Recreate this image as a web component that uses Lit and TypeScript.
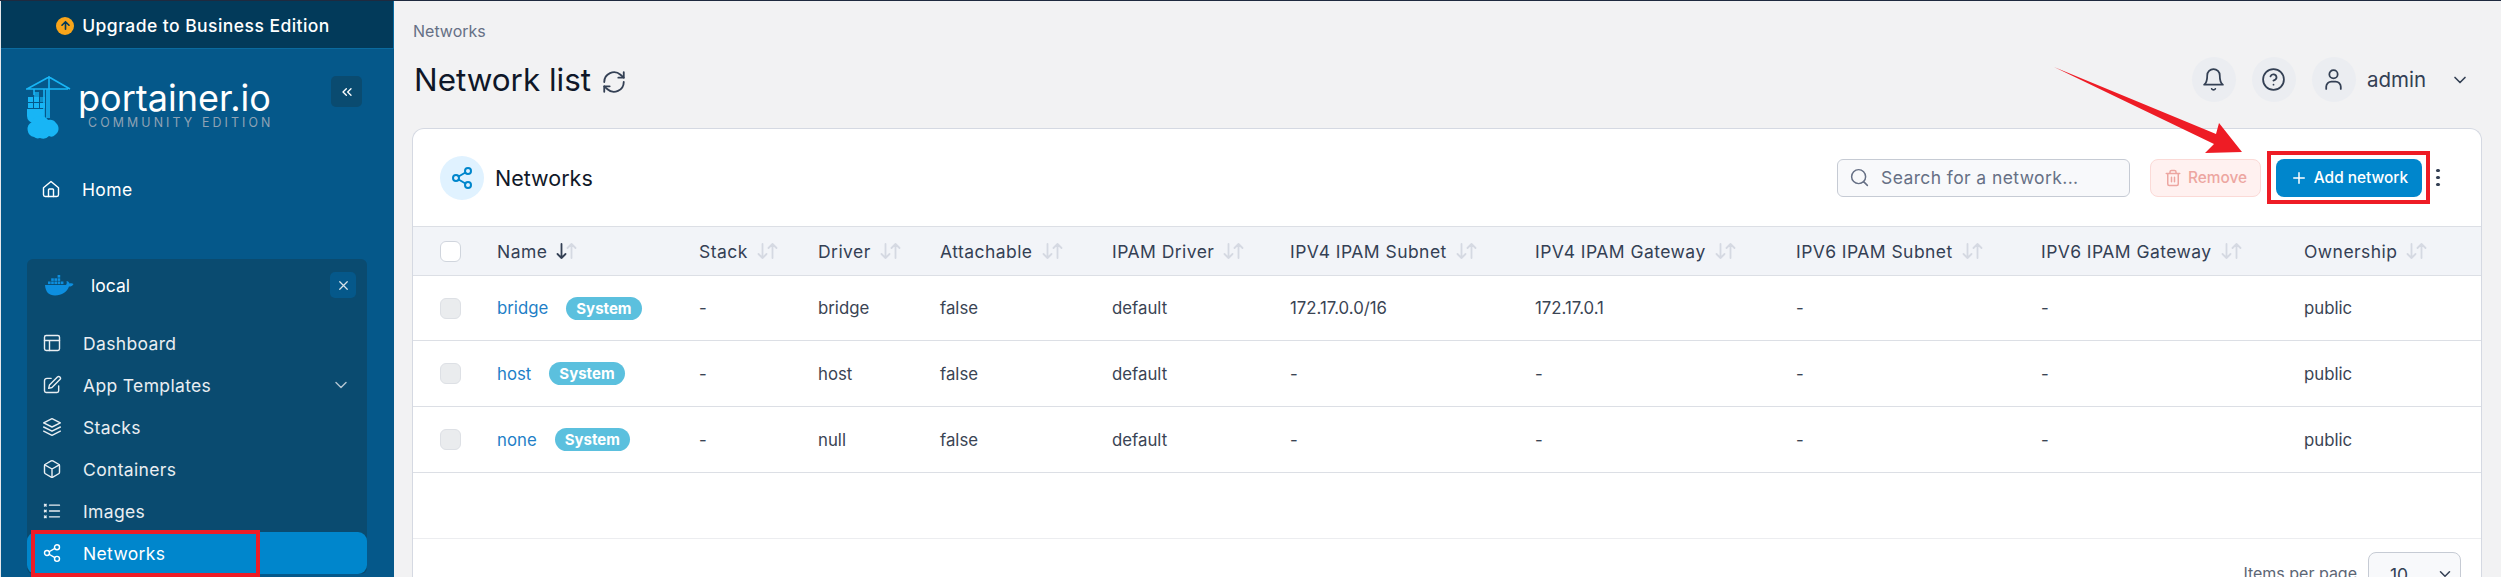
import { LitElement, html, css, svg } from "lit";
import { customElement } from "lit/decorators.js";

const ic = (body: unknown, cls = "ic") => html`<svg class=${cls} viewBox="0 0 24 24" fill="none" stroke="currentColor" stroke-width="2" stroke-linecap="round" stroke-linejoin="round">${body}</svg>`;
const I = {
  home: svg`<path d="M3 10.5 12 3l9 7.5V19a2 2 0 0 1-2 2H5a2 2 0 0 1-2-2z"/><path d="M9 21v-8a1 1 0 0 1 1-1h4a1 1 0 0 1 1 1v8"/>`,
  dash: svg`<rect x="3" y="3" width="18" height="18" rx="2"/><path d="M3 9h18M9 21V9"/>`,
  edit: svg`<path d="M11 4H6a3 3 0 0 0-3 3v12a2 2 0 0 0 2 2h13a2 2 0 0 0 2-2v-6"/><path d="M18.5 2.5a2.1 2.1 0 0 1 3 3L12 15l-4 1 1-4z"/>`,
  layers: svg`<path d="M12 2 2 7l10 5 10-5z"/><path d="m2 12 10 5 10-5"/><path d="m2 17 10 5 10-5"/>`,
  box: svg`<path d="M21 16V8a2 2 0 0 0-1-1.7l-7-4a2 2 0 0 0-2 0l-7 4A2 2 0 0 0 3 8v8a2 2 0 0 0 1 1.7l7 4a2 2 0 0 0 2 0l7-4a2 2 0 0 0 1-1.7z"/><path d="M3.3 7 12 12l8.7-5M12 22V12"/>`,
  list: svg`<path d="M9 5h12M9 12h12M9 19h12M3 4l2 2M5 4 3 6M3 11l2 2M5 11l-2 2M3 18l2 2M5 18l-2 2" stroke-width="1.6"/>`,
  share: svg`<circle cx="18" cy="5" r="3"/><circle cx="6" cy="12" r="3"/><circle cx="18" cy="19" r="3"/><path d="m8.6 13.5 6.8 4M15.4 6.5l-6.8 4"/>`,
  bell: svg`<path d="M18 8a6 6 0 0 0-12 0c0 7-3 9-3 9h18s-3-2-3-9"/><path d="M13.7 21a2 2 0 0 1-3.4 0"/>`,
  help: svg`<circle cx="12" cy="12" r="10"/><path d="M9.1 9a3 3 0 0 1 5.8 1c0 2-3 3-3 3M12 17h.01"/>`,
  user: svg`<path d="M5 21v-2a5 5 0 0 1 5-5h4a5 5 0 0 1 5 5v2"/><circle cx="12" cy="7" r="4"/>`,
  search: svg`<circle cx="11" cy="11" r="8"/><path d="m21 21-4.3-4.3"/>`,
  trash: svg`<path d="M3 6h18M19 6v14a2 2 0 0 1-2 2H7a2 2 0 0 1-2-2V6M8 6V4a2 2 0 0 1 2-2h4a2 2 0 0 1 2 2v2M10 11v6M14 11v6"/>`,
  plus: svg`<path d="M12 5v14M5 12h14"/>`,
  refresh: svg`<path d="M3 12a9 9 0 0 1 15-6.7L21 8"/><path d="M21 3v5h-5"/><path d="M21 12a9 9 0 0 1-15 6.7L3 16"/><path d="M8 16H3v5"/>`,
  chevrons: svg`<path d="m11 17-5-5 5-5M18 17l-5-5 5-5"/>`,
  x: svg`<path d="M18 6 6 18M6 6l12 12"/>`,
  down: svg`<path d="m6 9 6 6 6-6"/>`,
};

const arrows = (active = false) => html`<svg class="sort" viewBox="0 0 21 16" fill="none" stroke-width="1.8" stroke-linecap="round" stroke-linejoin="round">
  <path class=${active ? "on" : "off"} d="M5.5 1v14M1.5 11l4 4 4-4"/><path class="off" d="M15.5 15V1M11.5 5l4-4 4 4"/></svg>`;

const COLS = ["Stack", "Driver", "Attachable", "IPAM Driver", "IPV4 IPAM Subnet", "IPV4 IPAM Gateway", "IPV6 IPAM Subnet", "IPV6 IPAM Gateway", "Ownership"];
const ROWS = [
  ["bridge", "-", "bridge", "false", "default", "172.17.0.0/16", "172.17.0.1", "-", "-", "public"],
  ["host", "-", "host", "false", "default", "-", "-", "-", "-", "public"],
  ["none", "-", "null", "false", "default", "-", "-", "-", "-", "public"],
];
const NAV: [string, unknown][] = [["Dashboard", I.dash], ["App Templates", I.edit], ["Stacks", I.layers], ["Containers", I.box], ["Images", I.list]];

@customElement("app-root")
export class AppRoot extends LitElement {
  static styles = css`
    :host { display: block; position: relative; width: 2501px; height: 577px; overflow: hidden; background: #f2f2f3; font-family: Inter, "Noto Sans", sans-serif; font-size: 17px; color: #344054; border-top: 1px solid #1f2a3f; box-sizing: border-box; }
    * { box-sizing: border-box; }
    .page { display: flex; height: 576px; }
    .ic { width: 1em; height: 1em; flex: none; display: block; }
    .side { width: 394px; flex: none; background: #05588a; color: #fff; border-left: 1px solid #e6e8ec; display: flex; flex-direction: column; overflow: hidden; }
    .upgrade { height: 48px; flex: none; background: #023a5a; border-bottom: 1px solid #0a6a9f; border-right: 1px solid #0a6a9f; display: flex; align-items: center; justify-content: center; gap: 8px; font-size: 17.5px; letter-spacing: .45px; font-weight: 500; padding: 2px 8px 0 0; }
    .upbadge { width: 18px; height: 18px; border-radius: 50%; background: #f9a51a; color: #023a5a; display: flex; align-items: center; justify-content: center; font-size: 13px; }
    .brand { display: flex; align-items: flex-start; padding: 27px 32px 0 24px; height: 107px; flex: none; }
    .wordmark { margin-left: 3px; margin-top: 5px; display: flex; flex-direction: column; }
    .wm1 { font-size: 36px; line-height: 34px; font-weight: 400; white-space: nowrap; }
    .wm2 { font-size: 12.4px; line-height: 14px; letter-spacing: 3.1px; margin-left: 10px; margin-top: 1px; color: #8fa3b5; white-space: nowrap; }
    .collapse { margin-left: auto; width: 31px; height: 31px; border-radius: 5px; background: #0a4b70; display: flex; align-items: center; justify-content: center; font-size: 16px; }
    .item { display: flex; align-items: center; height: 42px; color: #e9eef2; font-size: 17.5px; letter-spacing: .35px; }
    .item .ic { font-size: 20px; stroke-width: 1.7; }
    .home { margin: 13px 0 0 40px; gap: 21px; color: #fff; height: 40px; }
    .env { margin: 50px 0 0 26px; width: 340px; border-radius: 6px; background: #0a4b70; flex: none; }
    .envhead { height: 63px; display: flex; align-items: center; padding: 0 11px 11px 17px; font-size: 17.5px; gap: 17px; }
    .whale { width: 30px; height: 22px; flex: none; }
    .close { margin-left: auto; width: 26px; height: 26px; border-radius: 5px; background: #05588a; display: flex; align-items: center; justify-content: center; font-size: 15px; color: #d8e2ea; }
    .nav .item { padding-left: 15px; gap: 21px; }
    .nav .item.active { background: #0086cc; border-radius: 9px; color: #fff; }
    .nav .chev { margin-left: auto; margin-right: 16px; opacity: .75; }

    .main { flex: 1; min-width: 0; padding: 0 19px 0 18px; display: flex; flex-direction: column; }
    .crumb { font-size: 16px; line-height: 18px; margin-top: 21px; color: #667085; padding-left: 1px; }
    .headrow { display: flex; align-items: center; height: 45px; margin-top: 17px; }
    h1 { margin: 0; font-size: 31.4px; line-height: 40px; font-weight: 400; color: #0f1728; margin-left: 2px; }
    .refresh { font-size: 26px; margin-left: 10px; margin-top: 4px; color: #344054; }
    .refresh .ic { stroke-width: 1.7; }
    .top { margin-left: auto; display: flex; align-items: center; gap: 16px; font-size: 25px; margin-right: 12px; }
    .circle { width: 44px; height: 45px; border-radius: 50%; background: #ebedf1; display: flex; align-items: center; justify-content: center; color: #344054; }
    .circle .ic { stroke-width: 1.7; }
    .admin { font-size: 20.5px; margin-left: -5px; margin-right: 8px; }
    .topchev { font-size: 20px; }

    .card { margin-top: 26px; flex: 1; background: #fff; border: 1px solid #d5d9e2; border-bottom: none; border-radius: 12px 12px 0 0; display: flex; flex-direction: column; overflow: hidden; min-height: 0; }
    .chead { height: 97px; flex: none; display: flex; align-items: center; padding: 0 0 0 27px; }
    .cicon { width: 44px; height: 44px; border-radius: 50%; background: #e0f2ff; color: #0086cc; display: flex; align-items: center; justify-content: center; font-size: 24px; }
    .ctitle { margin-left: 11px; font-size: 21.5px; color: #101828; }
    .search { margin-left: auto; width: 293px; height: 38px; border: 1px solid #c6cbd4; border-radius: 6px; background: #f8f9fb; display: flex; align-items: center; padding-left: 11px; gap: 11px; font-size: 17.5px; letter-spacing: .4px; color: #667085; white-space: nowrap; }
    .search .ic { font-size: 21px; stroke-width: 1.7; }
    .remove { margin-left: 20px; width: 111px; height: 38px; border: 1px solid #fbdad7; background: #fff1f0; color: #eda6a1; border-radius: 8px; display: flex; align-items: center; justify-content: center; gap: 6px; font-size: 15.4px; font-weight: 500; }
    .remove .ic { font-size: 18px; }
    .add { margin-left: 15px; width: 146px; height: 38px; background: #0086cc; color: #fff; border-radius: 8px; display: flex; align-items: center; justify-content: center; gap: 6px; font-size: 15.4px; font-weight: 500; }
    .add .ic { font-size: 18px; }
    .dots { margin-left: 13px; width: 6px; display: flex; flex-direction: column; gap: 3.5px; align-items: center; margin-right: 40px; }
    .dots i { width: 3.5px; height: 3.5px; background: #344054; border-radius: 50%; display: block; }

    .grid { display: grid; grid-template-columns: 84px 202px 119px 122px 172px 178px 245px 261px 245px 263px 1fr; align-items: center; }
    .thead { height: 50px; background: #f2f4f8; border-top: 1px solid #dcdfe5; border-bottom: 1px solid #dcdfe5; flex: none; font-size: 17.5px; letter-spacing: .45px; }
    .th { display: flex; align-items: center; gap: 9px; white-space: nowrap; }
    .sort { width: 21px; height: 16px; flex: none; }
    .sort .off { stroke: #d5d9e2; }
    .sort .on { stroke: #344054; }
    .row { flex: none; height: 66px; border-bottom: 1px solid #dcdfe5; font-size: 16.8px; color: #3a4454; }
    .row.r0 { height: 65px; }
    .cb { width: 21px; height: 21px; border-radius: 6px; margin-left: 27px; border: 1px solid #dde0e5; background: #eaecee; }
    .cb.head { background: #fff; border-color: #d0d5dd; }
    .name { display: flex; align-items: center; gap: 18px; }
    .link { color: #1f7fc7; }
    .badge { background: #5bc0de; color: #fff; font-weight: 700; font-size: 15px; border-radius: 12px; height: 23px; padding: 0 10px; display: flex; align-items: center; }
    .spacer { height: 66px; flex: none; border-bottom: 1px solid #ecedf0; }
    .foot { display: flex; justify-content: flex-end; align-items: flex-start; padding: 13px 20px 0 0; gap: 11px; font-size: 16px; color: #5c6675; }
    .foot span { margin-top: 11px; line-height: 20px; }
    .sel { width: 93px; height: 44px; border: 1px solid #c6cbd4; border-radius: 8px; background: #f8f9fb; display: flex; align-items: center; padding-left: 21px; color: #344054; font-size: 17.5px; }
    .sel .ic { margin-left: auto; margin-right: 6px; font-size: 18px; }

    .red { position: absolute; border: 4px solid #ee1c25; pointer-events: none; }
    .red.a { left: 31px; top: 529px; width: 229px; height: 47px; }
    .red.b { left: 2267px; top: 150px; width: 163px; height: 53px; }
    .arrow { position: absolute; left: 2050px; top: 59px; width: 200px; height: 100px; pointer-events: none; }
    .logo { flex: none; }
  `;

  logo() {
    return html`<svg class="logo" width="50" height="66" viewBox="0 0 50 66" fill="none">
      <g stroke="#18b5f5" stroke-width="1.6" fill="none">
        <path d="M1 13h42M2 13 24 1l21 12M24 0v42M19 13v29M22 13v29"/><path d="M9 13v6"/>
      </g>
      <g fill="#18b5f5">
        <rect x="9" y="16" width="5" height="5" opacity=".7"/>
        <rect x="3" y="21" width="5" height="5"/><rect x="9" y="21" width="5" height="5"/><rect x="15" y="21" width="5" height="5" opacity=".6"/>
        <rect x="3" y="27" width="5" height="5"/><rect x="9" y="27" width="5" height="5"/><rect x="15" y="27" width="5" height="5"/>
        <path d="M2 33h17v6a8 8 0 0 1-8 8H9a7 7 0 0 1-7-7z"/>
        <path d="M9 61a8 8 0 0 1-2-15 8.500 8.500 0 0 1 8-6 9 9 0 0 1 8 4 7.500 7.500 0 0 1 8 3 7.500 7.500 0 0 1-1 12 5 5 0 0 1-6 1 8 8 0 0 1-9 2 6 6 0 0 1-6-1z"/>
      </g></svg>`;
  }

  whale() {
    return html`<svg class="whale" viewBox="0 0 30 22" fill="#0d8fe0">
      <path d="M1 11h21c1-1 .8-3 .5-4 1.500.2 2.500 1 3 2.500 1.500-.5 3-.3 4 .5-1 2-2.500 2.500-4.500 2.500C23 18 18 21.500 11 21.500 5 21.500 1.500 18 1 11z"/>
      <g><rect x="4" y="7.500" width="2.600" height="2.600"/><rect x="7.200" y="7.500" width="2.600" height="2.600"/><rect x="10.400" y="7.500" width="2.600" height="2.600"/><rect x="13.600" y="7.500" width="2.600" height="2.600"/><rect x="16.800" y="7.500" width="2.600" height="2.600"/>
      <rect x="7.200" y="4.300" width="2.600" height="2.600"/><rect x="10.400" y="4.300" width="2.600" height="2.600"/><rect x="13.600" y="4.300" width="2.600" height="2.600"/><rect x="13.600" y="1" width="2.600" height="2.600"/></g></svg>`;
  }

  render() {
    return html`
      <div class="page">
        <aside class="side">
          <div class="upgrade"><span class="upbadge">${ic(svg`<path d="M12 19V5M5.500 11.500 12 5l6.500 6.500" stroke-width="3"/>`)}</span>Upgrade to Business Edition</div>
          <div class="brand">
            ${this.logo()}
            <div class="wordmark"><div class="wm1">portainer.io</div><div class="wm2">COMMUNITY EDITION</div></div>
            <div class="collapse">${ic(I.chevrons)}</div>
          </div>
          <div class="item home">${ic(I.home)}Home</div>
          <div class="env">
            <div class="envhead">${this.whale()}<span>local</span><div class="close">${ic(I.x)}</div></div>
            <div class="nav">
              ${NAV.map(([t, i]) => html`<div class="item">${ic(i)}${t}${t === "App Templates" ? html`<span class="chev">${ic(I.down)}</span>` : ""}</div>`)}
              <div class="item active">${ic(I.share)}Networks</div>
            </div>
          </div>
        </aside>
        <main class="main">
          <div class="crumb">Networks</div>
          <div class="headrow">
            <h1>Network list</h1><span class="refresh">${ic(I.refresh)}</span>
            <div class="top">
              <div class="circle">${ic(I.bell)}</div><div class="circle">${ic(I.help)}</div><div class="circle">${ic(I.user)}</div>
              <span class="admin">admin</span><span class="topchev">${ic(I.down)}</span>
            </div>
          </div>
          <section class="card">
            <div class="chead">
              <div class="cicon">${ic(I.share)}</div><div class="ctitle">Networks</div>
              <div class="search">${ic(I.search)}Search for a network...</div>
              <div class="remove">${ic(I.trash)}Remove</div>
              <div class="add">${ic(I.plus)}Add network</div>
              <div class="dots"><i></i><i></i><i></i></div>
            </div>
            <div class="grid thead">
              <div class="cb head"></div>
              <div class="th">Name ${arrows(true)}</div>
              ${COLS.map((c) => html`<div class="th">${c} ${arrows()}</div>`)}
            </div>
            ${ROWS.map((r, n) => html`<div class="grid row r${n}">
              <div class="cb"></div>
              <div class="name"><span class="link">${r[0]}</span><span class="badge">System</span></div>
              ${r.slice(1).map((v) => html`<div>${v}</div>`)}
            </div>`)}
            <div class="spacer"></div>
            <div class="foot"><span>Items per page</span><div class="sel">10${ic(I.down)}</div></div>
          </section>
        </main>
      </div>
      <div class="red a"></div>
      <div class="red b"></div>
      <svg class="arrow" viewBox="0 0 200 100"><path fill="#ee1c25" d="M4 7 166 74 169 63 192 92 155 93 164 84Z"/></svg>
    `;
  }
}
